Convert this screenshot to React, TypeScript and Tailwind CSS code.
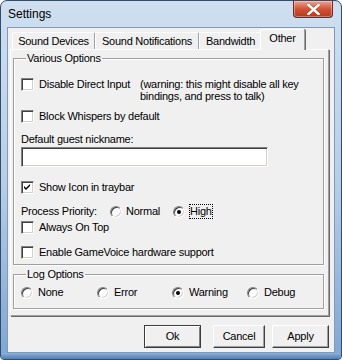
import React from 'react';

const ui = "font-['Liberation_Sans',Arial,sans-serif] text-[11px] leading-[13px] tracking-[-0.25px] text-black";

function Check({ checked = false }: { checked?: boolean }) {
  return (
    <span className="flex h-[13px] w-[13px] shrink-0 items-center justify-center border border-t-[#808080] border-l-[#808080] border-r-white border-b-white bg-white shadow-[inset_1px_1px_0_#404040,inset_-1px_-1px_0_#d4d0c8]">
      {checked && (
        <svg width="7" height="7" viewBox="0 0 7 7">
          <path d="M0 2 L2 4 L6 0 L6 2 L2 6 L0 4 Z" fill="#000" />
        </svg>
      )}
    </span>
  );
}

function Radio({ checked = false }: { checked?: boolean }) {
  return (
    <span className="flex h-[12px] w-[12px] shrink-0 items-center justify-center rounded-full border border-t-[#808080] border-l-[#808080] border-r-white border-b-white bg-white shadow-[inset_1px_1px_0_#404040,inset_-1px_-1px_0_#d4d0c8]">
      {checked && <span className="h-[4px] w-[4px] rounded-full bg-black" />}
    </span>
  );
}

const tabs = [
  { label: 'Sound Devices', w: 'w-[83px]' },
  { label: 'Sound Notifications', w: 'w-[104px]' },
  { label: 'Bandwidth', w: 'w-[63px]' },
];

const logLevels = [
  { label: 'None', checked: false },
  { label: 'Error', checked: false },
  { label: 'Warning', checked: true },
  { label: 'Debug', checked: false },
];

export default function App() {
  return (
    <div className={`${ui} flex h-[360px] w-[342px] flex-col overflow-hidden rounded-t-[7px] rounded-b-[4px] border border-[#2f4d6d] bg-gradient-to-b from-[#cfdff0] via-[#b8cee6] to-[#7fa6d2]`}>
      {/* title bar */}
      <div className="flex h-[26px] shrink-0 justify-between">
        <span className="ml-[7px] self-center text-[12px] leading-[15px] tracking-normal">Settings</span>
        <button className="mr-[8px] flex h-[17px] w-[40px] items-center justify-center rounded-b-[4px] border border-t-0 border-[#6e2a1f] bg-gradient-to-b from-[#eaa495] via-[#cf5338] to-[#b8361b] shadow-[inset_0_0_0_1px_rgba(255,255,255,0.35)]">
          <svg width="13" height="11" viewBox="0 0 13 11">
            <path d="M1.5 1 L11.5 10 M11.5 1 L1.5 10" stroke="#5a1a10" strokeWidth="3.4" strokeLinecap="square" opacity="0.35" />
            <path d="M1.5 1 L11.5 10 M11.5 1 L1.5 10" stroke="#fff" strokeWidth="2.4" strokeLinecap="square" />
          </svg>
        </button>
      </div>

      {/* client area */}
      <div className="mx-[6px] flex h-[326px] shrink-0 flex-col border border-[#7f9bb9] bg-[#f0f0f0]">
        {/* tab headers */}
        <div className="ml-[2px] flex h-[21px] items-end pl-[2px]">
          {tabs.map((t) => (
            <div
              key={t.label}
              className={`${t.w} flex h-[17px] items-center justify-center rounded-t-[2px] border-t border-l border-r border-t-white border-l-white border-r-[#a0a0a0]`}
            >
              {t.label}
            </div>
          ))}
          <div className="relative z-10 -mb-[1px] -ml-[2px] flex h-[21px] w-[45px] justify-center rounded-t-[2px] border-t border-l border-r border-t-white border-l-white border-r-[#a0a0a0] bg-[#f0f0f0] pt-[2px] shadow-[1px_0_0_#696969]">
            Other
          </div>
        </div>

        {/* tab panel */}
        <div className="ml-[2px] flex h-[267px] w-[319px] flex-col border border-t-white border-l-white border-r-[#a0a0a0] border-b-[#a0a0a0] shadow-[1px_1px_0_#696969]">
          <fieldset className="ml-[2px] mt-[2px] h-[213px] w-[311px] border border-[#a0a0a0] pl-[7px] pt-[13px] shadow-[inset_1px_1px_0_#fff,1px_1px_0_#fff]">
            <legend className="ml-[5px] px-[1px]">Various Options</legend>

            <div className="flex items-start">
              <Check />
              <span className="ml-[5px] w-[101px] leading-[12px]">Disable Direct Input</span>
              <span className="leading-[12px]">
                (warning: this might disable all key
                <br />
                bindings, and press to talk)
              </span>
            </div>

            <div className="mt-[8px] flex items-center">
              <Check />
              <span className="ml-[5px]">Block Whispers by default</span>
            </div>

            <div className="mt-[10px]">Default guest nickname:</div>
            <div className="mt-[1px] h-[20px] w-[247px] border border-t-[#808080] border-l-[#808080] border-r-white border-b-white bg-white shadow-[inset_1px_1px_0_#404040,inset_-1px_-1px_0_#d4d0c8]" />

            <div className="mt-[14px] flex items-center">
              <Check checked />
              <span className="ml-[5px]">Show Icon in traybar</span>
            </div>

            <div className="mt-[11px] flex h-[13px] items-center">
              <span className="w-[89px]">Process Priority:</span>
              <span className="flex w-[63px] items-center">
                <Radio />
                <span className="ml-[4px]">Normal</span>
              </span>
              <span className="flex items-center">
                <Radio checked />
                <span className="ml-[4px] border border-dotted border-black">High</span>
              </span>
            </div>

            <div className="mt-[3px] flex items-center">
              <Check />
              <span className="ml-[5px]">Always On Top</span>
            </div>

            <div className="mt-[12px] flex items-center">
              <Check />
              <span className="ml-[5px]">Enable GameVoice hardware support</span>
            </div>
          </fieldset>

          <fieldset className="ml-[2px] mt-[3px] h-[41px] w-[311px] border border-[#a0a0a0] pl-[7px] pt-[5px] shadow-[inset_1px_1px_0_#fff,1px_1px_0_#fff]">
            <legend className="ml-[5px] px-[1px]">Log Options</legend>
            <div className="grid grid-cols-[76px_75px_75px_auto]">
              {logLevels.map((l) => (
                <span key={l.label} className="flex items-center">
                  <Radio checked={l.checked} />
                  <span className="ml-[5px]">{l.label}</span>
                </span>
              ))}
            </div>
          </fieldset>
        </div>

        {/* buttons */}
        <div className="mt-[9px] flex">
          <button className="ml-[136px] h-[23px] w-[57px] border border-[#3c3c3c] bg-[#f0f0f0] shadow-[inset_1px_1px_0_#fff,inset_-1px_-1px_0_#808080]">
            Ok
          </button>
          <button className="ml-[12px] h-[23px] w-[52px] border border-t-white border-l-white border-r-[#404040] border-b-[#404040] bg-[#f0f0f0] shadow-[inset_-1px_-1px_0_#a0a0a0]">
            Cancel
          </button>
          <button className="ml-[7px] h-[23px] w-[57px] border border-t-white border-l-white border-r-[#404040] border-b-[#404040] bg-[#f0f0f0] shadow-[inset_-1px_-1px_0_#a0a0a0]">
            Apply
          </button>
        </div>
      </div>

      {/* bottom frame */}
      <div className="flex-1 bg-gradient-to-b from-[#8db1d9] to-[#4f7fb6]" />
    </div>
  );
}
